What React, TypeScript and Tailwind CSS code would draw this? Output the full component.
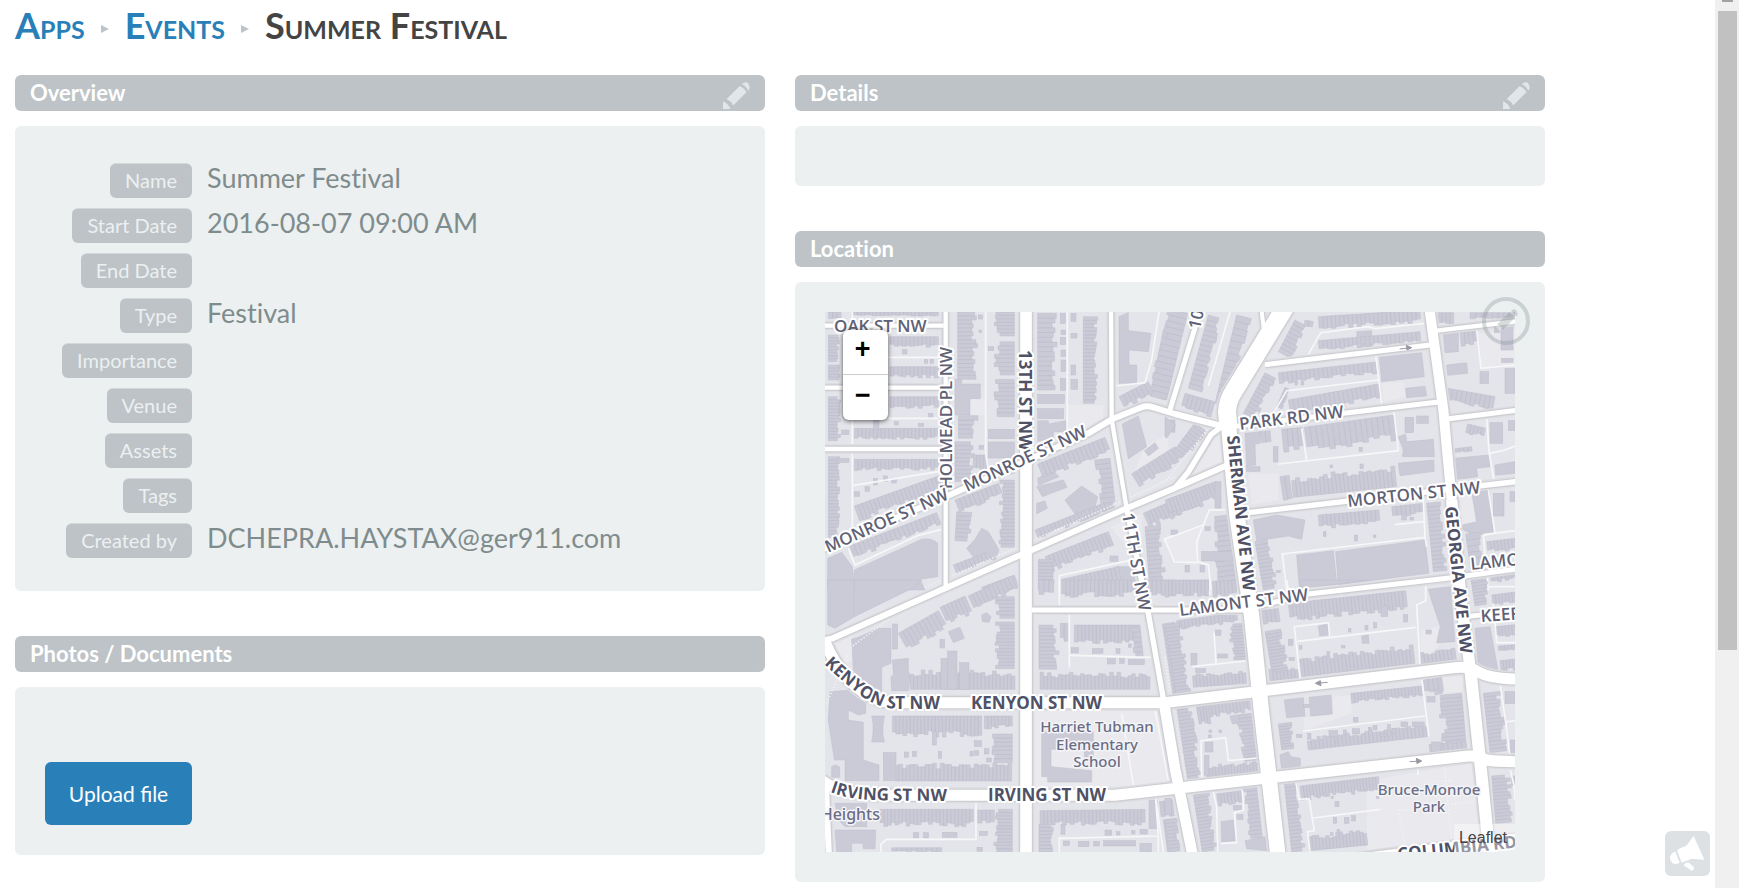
import type { ReactNode } from 'react';

type Row = [number, number, number, number, number, number];
type Box = [number, number, number, number];

interface District {
  x: number;
  y: number;
  grounds: string[];
  rows: Row[];
  shapes: string[];
  boxes: Box[];
  lanes: string[];
  paths: string[];
}

/* Terraced houses: n units along a street front, each with its own depth. */
function terrace([x1, y1, x2, y2, depth, n]: Row): string {
  const len = Math.hypot(x2 - x1, y2 - y1);
  const ux = (x2 - x1) / len;
  const uy = (y2 - y1) / len;
  const step = len / n;
  let d = '';
  for (let i = 0; i < n; i++) {
    const noise = Math.abs(Math.sin((i + 1) * 12.9898 + x1 * 0.37 + y1 * 0.73) * 43.7) % 1;
    const h = depth * (0.7 + noise * 0.34);
    const ax = x1 + ux * step * i;
    const ay = y1 + uy * step * i;
    const bx = ax + ux * step;
    const by = ay + uy * step;
    d += `M${ax.toFixed(1)} ${ay.toFixed(1)}L${bx.toFixed(1)} ${by.toFixed(1)}L${(bx - uy * h).toFixed(1)} ${(by + ux * h).toFixed(1)}L${(ax - uy * h).toFixed(1)} ${(ay + ux * h).toFixed(1)}Z`;
  }
  return d;
}

const districts: District[] = [
  {
    x: -30, y: -36,
    grounds: ['M755 315H865V372L755 420Z', 'M465 295H510V345H465Z', 'M890 680L980 640V780L900 700Z', 'M990 440L1060 400V450L960 510Z'],
    rows: [
      [115, 36, 370, 36, 12, 22], [40, 36, 78, 36, 20, 3],
      [40, 105, 40, 185, -35, 9], [40, 195, 40, 240, -35, 5], [40, 290, 40, 422, -36, 14], [40, 470, 40, 712, -34, 24],
      [225, 110, 370, 110, 32, 12], [225, 200, 370, 200, 33, 12], [225, 290, 370, 290, 34, 12],
      [118, 385, 370, 385, 32, 22], [118, 478, 370, 478, 33, 22],
      [118, 618, 370, 528, 48, 22], [104, 738, 365, 638, 40, 20],
      [428, 36, 428, 238, -58, 17], [430, 347, 430, 415, -58, 5], [420, 425, 420, 545, -58, 10], [475, 465, 515, 465, 52, 4],
      [598, 36, 598, 108, 60, 7], [598, 125, 598, 225, 58, 8], [598, 238, 598, 350, 60, 9], [598, 540, 598, 742, 46, 19],
      [668, 40, 668, 270, -56, 16], [805, 50, 805, 310, -43, 24],
      [1045, 90, 1015, 240, -60, 7], [912, 290, 1000, 245, 42, 7], [950, 522, 1080, 440, 50, 11],
      [668, 492, 870, 412, 46, 16], [660, 690, 890, 600, 28, 20], [885, 475, 900, 605, 46, 9],
      [420, 600, 550, 550, 40, 10], [425, 635, 420, 722, -48, 7], [415, 795, 520, 755, 28, 9],
      [690, 770, 880, 695, 48, 17], [670, 778, 670, 870, -46, 9], [740, 838, 910, 800, 60, 14], [985, 640, 1080, 598, 50, 9],
      [990, 680, 1005, 870, -48, 15], [500, 862, 598, 825, 45, 9], [1060, 360, 1080, 360, 40, 2],
    ],
    shapes: [
      'M38 775L80 757L112 800L118 850V870H38Z', 'M118 810L320 718Q350 712 368 730V830L315 838L330 870H118Z',
      'M420 238H440V252H496V296H465V345H420Z', 'M668 362H700V372L752 362V395H715V415L668 424Z',
      'M912 50L940 38V92L1008 100L1000 155L942 150V195H965V250H912Z', 'M922 372L970 348L995 440L940 476Z',
      'M665 560L745 540L756 562L682 590Z', 'M665 610L690 603L697 625L665 642Z', 'M750 600L800 558L848 590L840 622L780 642Z',
      'M455 745L480 718L500 685L520 695L552 750L540 782L515 775L490 790Z', 'M988 452L1020 428L1030 445L1000 468Z', 'M1035 245L1058 252L1050 300L1026 292Z',
      'M668 535L712 510L732 530L670 556Z', 'M905 800H950L968 870H912Z', 'M545 495L598 480V520L550 530Z',
    ],
    boxes: [
      [520, 388, 78, 28], [520, 426, 78, 48], [668, 283, 80, 27], [668, 326, 78, 30], [738, 90, 14, 14], [736, 40, 15, 30], [736, 112, 16, 22],
      [738, 150, 14, 20], [738, 180, 14, 35], [736, 235, 16, 36], [768, 40, 15, 24], [768, 100, 18, 14], [768, 195, 14, 30], [768, 238, 20, 30],
      [118, 575, 16, 14], [150, 560, 14, 14], [175, 535, 12, 20], [205, 528, 12, 16], [230, 535, 14, 14], [328, 178, 10, 12], [345, 178, 10, 12],
      [262, 148, 14, 14], [490, 45, 12, 12], [520, 140, 16, 12], [176, 360, 16, 28], [340, 340, 14, 12], [238, 365, 12, 10], [310, 370, 16, 10],
      [492, 436, 14, 12], [492, 90, 8, 8], [885, 768, 24, 16], [92, 330, 10, 10], [80, 390, 22, 14], [68, 475, 34, 12],
    ],
    lanes: ['M112 36V680', 'M112 557L370 515', 'M220 172H370', 'M220 355H370', 'M100 745L120 795L310 706L380 688', 'M512 36V460L520 510', 'M757 36V420', 'M1032 36L1010 180L990 248L900 258', 'M733 870V827L960 778', 'M1080 705L1048 717L1080 780'],
    paths: ['M330 862L600 745', 'M655 720L930 600L1080 530', 'M905 380L945 600', 'M945 610L1080 550'],
  },
  {
    x: 1020, y: -36,
    grounds: ['M650 250L715 245L722 292L655 305Z', 'M250 520H340V600L260 615Z', 'M865 590H930V665L885 680Z', 'M940 100L1050 90V200L950 206Z', 'M90 470L170 400V490L80 535Z', 'M0 720L110 680L95 790L25 785Z'],
    rows: [
      [68, 40, 5, 300, 60, 15], [130, 45, 70, 265, -42, 15], [215, 45, 150, 310, -46, 14], [60, 280, 150, 305, 48, 7],
      [25, 455, 90, 368, 45, 9], [0, 600, 150, 545, 55, 14], [390, 60, 340, 155, -46, 8], [420, 60, 445, 65, 22, 2],
      [460, 50, 765, 30, 38, 24], [460, 122, 765, 95, 30, 24], [340, 218, 632, 186, 34, 22], [300, 218, 235, 340, -42, 11],
      [370, 300, 640, 252, 48, 20], [360, 262, 335, 320, -18, 6], [885, 97, 935, 92, 42, 4], [850, 265, 990, 290, 42, 10],
      [820, 38, 866, 38, 36, 4], [915, 38, 1050, 38, 18, 8], [350, 388, 412, 382, 75, 4], [418, 382, 685, 345, 78, 16],
      [345, 530, 372, 526, 76, 2], [385, 592, 695, 560, -62, 26], [270, 725, 295, 870, -42, 13], [460, 645, 642, 630, 42, 15],
      [680, 620, 775, 610, 32, 7], [785, 610, 805, 815, -44, 17], [188, 645, 215, 870, 52, 15], [0, 845, 135, 840, 35, 12],
      [908, 372, 962, 385, 28, 5], [870, 446, 920, 440, 14, 4], [965, 725, 1050, 715, 34, 8], [902, 702, 925, 870, -46, 9], [975, 815, 1050, 808, 32, 7],
      [150, 545, 168, 545, 78, 1], [285, 395, 315, 392, 36, 2],
    ],
    shapes: [
      'M643 172L770 158L778 230L650 245Z', 'M722 265L780 259L785 288L725 293Z', 'M835 100L880 95V155L840 158Z', 'M845 195L905 188L908 220L848 226Z',
      'M700 410L722 402L725 425L805 418L808 470H712L715 450Z', 'M700 490L806 480L808 514L705 527Z', 'M265 660L335 645L420 660L410 718L370 708L275 722Z',
      'M395 765L505 752L516 853L403 863Z', 'M512 755L780 720L792 820L520 854Z', 'M868 475L970 465L975 500L935 505L938 530L878 538Z',
      'M920 578L972 570L986 700L930 705L895 690L892 675L935 665Z', 'M990 495L1050 485V520L992 526Z', 'M240 400L285 395V430L270 432L272 495L245 498Z',
      'M575 95L620 92L622 138L578 142Z', 'M0 350L32 375L5 415L0 410Z',
    ],
    boxes: [
      [325, 440, 14, 46], [720, 352, 26, 46], [755, 348, 35, 22], [1008, 78, 36, 72], [1020, 206, 30, 74], [945, 215, 26, 36], [975, 368, 38, 62],
      [1030, 362, 20, 30], [985, 580, 32, 68], [1035, 575, 15, 30], [110, 755, 92, 28], [495, 495, 8, 8], [585, 492, 10, 14], [582, 442, 10, 12],
      [568, 705, 10, 18], [475, 695, 8, 14], [710, 640, 14, 20], [735, 652, 10, 8], [625, 705, 8, 8], [120, 680, 16, 12], [60, 796, 14, 20], [105, 796, 14, 20],
      [18, 690, 20, 14], [1010, 175, 34, 12], [245, 500, 40, 14], [335, 812, 12, 6], [390, 245, 8, 10], [408, 245, 8, 10],
    ],
    lanes: ['M195 36L130 258', 'M425 172L467 98L610 80L630 86L780 70', 'M632 165L650 310', 'M325 340L365 272L640 240', 'M410 385L425 480', 'M340 492L700 452L686 330', 'M935 90L948 205L1050 195', 'M965 350L972 455L990 560', 'M975 460L1020 450L1050 438', 'M970 570L990 700L955 706L970 870', 'M955 704L1050 692', 'M365 870L352 762L780 712L775 600', 'M690 674L780 664', 'M180 630H133L95 725L98 785L130 795L138 870', 'M0 718L112 676', 'M0 718L28 786L98 788', 'M780 712L785 740'],
    paths: ['M0 595L180 500', 'M168 385L185 600', 'M5 540L150 360'],
  },
  {
    x: -30, y: 804,
    grounds: ['M655 390L1040 388L1072 600L950 618L655 626Z', 'M30 180L110 150L120 240L60 260L30 210Z'],
    rows: [
      [375, 82, 450, 48, 58, 7], [460, 48, 590, -12, 46, 11], [250, 160, 370, 92, 62, 10], [598, 50, 598, 115, 60, 6], [598, 126, 598, 266, 58, 14],
      [285, 328, 600, 328, -56, 28], [672, 135, 672, 268, -60, 12], [778, 135, 975, 135, 54, 18], [675, 328, 1005, 328, -50, 30],
      [672, 0, 716, 0, 48, 3], [740, 0, 950, 0, 50, 17], [970, 0, 1080, 0, 46, 8], [232, 408, 500, 408, 62, 25], [508, 408, 592, 408, 38, 8],
      [592, 462, 592, 548, 60, 7], [240, 603, 590, 603, -52, 31], [195, 688, 475, 688, 50, 25], [592, 688, 592, 816, 54, 13], [230, 803, 380, 803, 13, 10],
      [675, 692, 990, 688, 46, 28], [672, 732, 672, 816, -46, 8], [1033, 665, 1072, 660, 46, 3], [1045, 720, 1058, 816, -42, 8], [1042, 132, 1075, 350, -42, 18],
      [975, 140, 985, 230, 28, 6], [736, 130, 758, 130, 52, 2], [488, 690, 538, 690, 38, 4],
    ],
    shapes: [
      'M38 0H118V110L60 145L38 135Z', 'M118 0H320L298 22L118 110Z', 'M400 155L435 142L448 175L415 188Z', 'M500 105L515 98L528 110L522 127L502 125Z',
      'M110 178L130 172L190 145H228V250L200 262V362L165 350L115 270Z', 'M232 240L280 235V270L285 292L280 332H230L228 290L236 285Z',
      'M45 335L110 330L152 365V400L130 405L100 390V420L145 427V540L192 555V602H90V540H58L40 420Z', 'M60 750H182L180 806H145L143 790H110V816H65Z',
      'M680 455H835V530H808V508H708V560L830 572V606H698V590H680Z', 'M50 560Q62 550 74 562V592H50Z', 'M60 670H155V740H90L70 720Z', 'M170 408H208L204 435V465L208 486H170L174 460V430Z',
    ],
    boxes: [
      [232, 132, 16, 75], [378, 235, 20, 92], [398, 213, 28, 115], [434, 248, 28, 80], [205, 518, 38, 84], [352, 455, 12, 40], [478, 482, 22, 18],
      [508, 506, 14, 16], [515, 534, 14, 12], [268, 516, 12, 16], [292, 514, 12, 16], [370, 515, 10, 20], [465, 514, 10, 14], [479, 512, 12, 14],
      [295, 758, 16, 16], [326, 758, 14, 16], [382, 757, 14, 15], [398, 757, 28, 15], [493, 754, 24, 12], [768, 203, 22, 16], [832, 206, 32, 14],
      [903, 206, 12, 14], [940, 192, 10, 10], [877, 236, 24, 16], [914, 236, 14, 14], [940, 238, 48, 16], [738, 733, 12, 30], [870, 750, 20, 16],
      [905, 755, 10, 10], [950, 752, 10, 10], [975, 748, 22, 14], [745, 783, 18, 14], [790, 784, 32, 16], [836, 784, 18, 14], [866, 782, 96, 16],
      [975, 790, 34, 26], [1002, 660, 24, 86], [375, 178, 14, 26], [486, 802, 16, 12],
    ],
    lanes: ['M763 95V262', 'M763 226L1010 232', 'M733 0V80', 'M733 816V775L1030 768L1022 655L1045 816', 'M483 665V778H215L198 792V816', 'M920 400L955 615', 'M1020 388L1060 600', 'M1030 768V816'],
    paths: ['M35 370L110 200L340 30L400 0', 'M1000 105L1040 350', 'M1025 75H1080'],
  },
  {
    x: 1020, y: 804,
    grounds: ['M605 602L918 550L965 816H605Z', 'M505 350L560 345V400L420 450L415 415L500 405Z', 'M770 150L820 140V200L765 240Z', 'M830 290L895 290L890 335L835 340Z'],
    rows: [
      [0, 0, 130, 0, 50, 12], [142, 4, 212, 0, 46, 6], [35, 122, 215, 98, 28, 16], [0, 135, 32, 342, -46, 20], [240, 130, 245, 238, 48, 12],
      [85, 322, 245, 310, -40, 15], [290, 92, 340, 85, 42, 4], [370, 70, 722, 32, 56, 32], [300, 155, 325, 300, -52, 15], [315, 302, 402, 293, -34, 8],
      [410, 290, 750, 250, -56, 30], [768, 252, 874, 238, -34, 9], [918, 0, 930, 78, -46, 8], [980, 45, 1050, 36, 34, 7], [990, 140, 1050, 134, 34, 6],
      [1000, 198, 1050, 194, 18, 5], [1005, 242, 1050, 237, 35, 5], [35, 380, 68, 600, -44, 21], [95, 382, 255, 355, 38, 15], [265, 400, 280, 540, 50, 13],
      [125, 592, 285, 580, -36, 17], [557, 340, 770, 318, 30, 21], [430, 510, 787, 470, -36, 31], [340, 432, 350, 510, -40, 9], [890, 340, 905, 512, 70, 15],
      [775, 300, 830, 292, 46, 4], [955, 340, 975, 518, -52, 16], [405, 618, 640, 590, 44, 25], [358, 612, 380, 816, -40, 19], [435, 812, 608, 795, -46, 17],
      [85, 645, 112, 816, -46, 17], [155, 642, 228, 632, 40, 7], [275, 620, 292, 772, 40, 13], [0, 720, 10, 816, -38, 9], [980, 588, 992, 730, -54, 14],
      [795, 518, 905, 506, -28, 8], [95, 380, 130, 375, 60, 4],
    ],
    shapes: [
      'M405 0H612L520 12L410 24Z', 'M790 28L856 20L870 185L815 188L826 140L800 62Z', 'M930 145L975 140L1000 277L940 258Z', 'M195 408L262 400V425L202 432Z',
      'M358 360L415 353L420 408L365 413Z', 'M432 352L498 345L502 402L437 408Z', 'M345 525L370 515L378 530L406 535V560L350 570Z', 'M168 725L205 720L212 782L170 786Z',
      'M240 782L300 770L305 812L245 806Z', 'M460 138L488 132L492 165L464 168Z', 'M590 168L610 165L612 190H592Z', 'M806 290L828 292L832 340L810 345Z',
    ],
    boxes: [
      [415, 373, 18, 10], [1020, 335, 30, 36], [1036, 480, 14, 38], [1040, 588, 10, 28], [0, 655, 20, 50], [565, 412, 14, 14], [395, 463, 16, 10],
      [428, 460, 10, 18], [456, 470, 10, 10], [492, 452, 26, 18], [535, 450, 10, 14], [562, 446, 22, 16], [610, 442, 10, 10], [624, 436, 12, 14], [645, 462, 18, 8],
      [668, 434, 8, 34], [682, 446, 10, 14], [708, 426, 20, 14], [742, 426, 36, 14], [786, 350, 24, 16], [512, 484, 8, 8], [600, 136, 9, 14], [626, 128, 9, 16],
      [550, 146, 8, 10], [648, 78, 20, 32], [716, 104, 12, 22], [783, 150, 16, 12], [403, 196, 8, 12], [486, 214, 8, 12], [530, 196, 10, 8], [530, 222, 8, 8],
      [78, 220, 18, 36], [158, 222, 30, 12], [152, 150, 16, 16], [92, 266, 30, 12], [370, 178, 14, 18], [372, 232, 16, 10], [120, 486, 24, 30], [118, 526, 14, 60],
      [132, 450, 8, 8], [162, 450, 8, 8], [130, 465, 10, 8], [510, 664, 12, 16], [505, 712, 10, 18], [538, 712, 14, 18], [560, 707, 12, 16], [516, 748, 8, 10],
      [496, 758, 8, 8], [205, 676, 24, 14], [216, 704, 18, 14], [498, 650, 8, 6], [634, 650, 8, 6], [800, 486, 28, 28],
    ],
    lanes: ['M135 0V45', 'M365 0L370 30', 'M147 158L153 250', 'M80 260L242 243', 'M405 295L388 140L490 128L494 170', 'M397 184L752 142', 'M782 15V62L755 75L765 252', 'M972 20H1050', 'M985 70L995 188H1050', 'M770 295L792 470', 'M414 453L780 408', 'M110 595L108 483L182 473L190 542L278 534', 'M145 635L155 680L158 816', 'M232 630L236 690L208 698L215 788L168 790', 'M392 605L402 658L432 656L448 752L428 755L435 816', 'M445 714L646 688', 'M1005 310L1022 425L1035 530', 'M1022 426L1050 422', 'M757 560L760 585', 'M1036 570L1048 620L1050 660'],
    paths: ['M22 385L62 600', 'M0 230L15 340', 'M838 560L842 600L850 680L860 780', 'M700 690L718 790', 'M700 690H750', 'M705 660L720 640', 'M800 605L865 602', 'M860 672L940 664', 'M20 372L260 348', 'M68 605L285 585'],
  },
];

/* [path, width] in thirds of a pixel */
const roads: [string, number][] = [
  ['M-20 41H356', 13], ['M-20 227H356', 13], ['M-20 411H356', 14], ['M362 -20V830', 13],
  ['M-10 713L362 554L790 364L860 322L950 286Q965 280 985 286L1050 306L1190 342', 18],
  ['M858 -20L860 322L905 589', 13], ['M905 589L970 904L1015 1160', 16], ['M1015 1160L1050 1370L1105 1640', 32],
  ['M-10 986L20 980L362 828L602 722L905 589L1050 528L1215 456', 18], ['M1050 528L1090 480L1158 368L1195 340', 16],
  ['M1384 -20L1225 240Q1208 265 1206 300L1210 340', 54], ['M1210 330L1235 604L1280 914L1310 1204L1360 1640', 46],
  ['M1812 -20L1855 294L1880 564', 30], ['M1880 564L1910 880L1935 1064', 34], ['M1935 1064L1965 1344L1995 1640', 36],
  ['M1320 158L1815 99', 15], ['M1220 344L1840 270', 15], ['M1865 321L2090 293', 15], ['M1835 56L2090 26', 13],
  ['M1270 602L2090 507', 16], ['M620 894H1250L1450 846L1880 797L2090 769', 15], ['M1920 914L2090 897', 14],
  ['M0 990Q60 1130 170 1168L220 1172H1020L1890 1067Q1935 1062 1960 1080Q2000 1102 2090 1101', 33],
  ['M-10 1405Q40 1445 170 1450H870L1320 1399L1930 1332Q1960 1330 1985 1344Q2010 1349 2090 1349', 33],
  ['M2 1400L12 1640', 18], ['M603 -20V1640', 35], ['M1128 -12L1033 300', 15], ['M1308 -20L1318 65', 12], ['M1600 1640L2090 1578', 30],
];

interface StreetLabel { text: string; x: number; y: number; turn: number; strong?: boolean }

const streetLabels: StreetLabel[] = [
  { text: 'OAK ST NW', x: 9, y: 20, turn: 0 },
  { text: 'HOLMEAD PL NW', x: 127, y: 177, turn: -90 },
  { text: '13TH ST NW', x: 194, y: 38, turn: 90, strong: true },
  { text: 'MONROE ST NW', x: 3, y: 241, turn: -24 },
  { text: 'MONROE ST NW', x: 142, y: 180, turn: -25 },
  { text: '11TH ST NW', x: 297, y: 202, turn: 80 },
  { text: '10', x: 375, y: 18, turn: -78 },
  { text: 'V', x: -8, y: 54, turn: -23 },
  { text: 'PARK RD NW', x: 415, y: 118, turn: -7 },
  { text: 'SHERMAN AVE NW', x: 402, y: 124, turn: 84, strong: true },
  { text: 'MORTON ST NW', x: 523, y: 195, turn: -6 },
  { text: 'GEORGIA AVE NW', x: 620, y: 195, turn: 84, strong: true },
  { text: 'LAMO', x: 646, y: 258, turn: -6 },
  { text: 'LAMONT ST NW', x: 355, y: 304, turn: -7 },
  { text: 'KEEF', x: 656, y: 310, turn: -4 },
  { text: 'KENYON ST NW', x: 146, y: 397, turn: 0, strong: true },
  { text: 'IRVING ST NW', x: 163, y: 489, turn: 0, strong: true },
  { text: 'COLUMBIA RD', x: 573, y: 548, turn: -6, strong: true },
];

function StreetMap() {
  return (
    <svg role="img" aria-label="Street map" width="690" height="540" viewBox="0 0 690 540" className="block max-w-none">
      <g transform="scale(0.33333)">
        <rect width="2071" height="1621" fill="#e4e5ea" />
        {districts.map((d, i) => (
          <g key={i} transform={`translate(${d.x} ${d.y})`}>
            {d.grounds.map((p) => <path key={p} d={p} fill="#e9e9ee" />)}
            <g fill="#cbcad7" stroke="#bfbecc" strokeWidth="1.5">
              {d.shapes.map((p) => <path key={p} d={p} />)}
              {d.rows.map((r) => <path key={r.join()} d={terrace(r)} />)}
              {d.boxes.map(([x, y, w, h]) => <rect key={`${x}-${y}`} x={x} y={y} width={w} height={h} />)}
            </g>
            <g fill="none" stroke="#f7f7f9" strokeWidth="5">
              {d.lanes.map((p) => <path key={p} d={p} />)}
            </g>
            <g fill="none" stroke="#f2f2f5" strokeWidth="5" strokeDasharray="4 6">
              {d.paths.map((p) => <path key={p} d={p} />)}
            </g>
          </g>
        ))}
        <g fill="none" stroke="#dcdde1" strokeLinejoin="round">
          {roads.map(([p, w]) => <path key={p} d={p} strokeWidth={w + 15} />)}
        </g>
        <g fill="none" stroke="#cdcdd2" strokeLinejoin="round">
          {roads.map(([p, w]) => <path key={p} d={p} strokeWidth={w + 7} />)}
        </g>
        <g fill="none" stroke="#fff" strokeLinejoin="round">
          {roads.map(([p, w]) => <path key={p} d={p} strokeWidth={w} />)}
        </g>
        <g fill="none" stroke="#9a9aa6" strokeWidth="3">
          <path d="M1724 111L1758 107M1744 100L1760 107L1746 114Z" fill="#9a9aa6" />
          <path d="M1508 1111L1474 1114M1486 1106L1471 1114L1488 1121Z" fill="#9a9aa6" />
          <path d="M1754 1349L1788 1347M1774 1339L1790 1347L1776 1355Z" fill="#9a9aa6" />
        </g>
      </g>
      <defs>
        <path id="kenyon-bend" d="M-2 351Q18 370 34 382Q48 394 69 397H145" />
        <path id="irving-bend" d="M5 480Q24 487 45 488Q60 489 145 489" />
      </defs>
      <g
        className="font-semibold [font-family:'Open_Sans','Noto_Sans',sans-serif] [paint-order:stroke]"
        fontSize="17"
        stroke="#fff"
        strokeWidth="4"
        strokeLinejoin="round"
      >
        {streetLabels.map((l, i) => (
          <text key={i} transform={`translate(${l.x} ${l.y}) rotate(${l.turn})`} fill={l.strong ? '#4f5166' : '#5f6175'} className={l.strong ? 'font-bold' : 'font-semibold'}>
            {l.text}
          </text>
        ))}
        <text fill="#4f5166" className="font-bold"><textPath href="#kenyon-bend" startOffset="1">KENYON ST NW</textPath></text>
        <text fill="#4f5166" className="font-bold"><textPath href="#irving-bend">IRVING ST NW</textPath></text>
      </g>
      <g
        className="font-medium [font-family:'Noto_Sans','Open_Sans',sans-serif] [paint-order:stroke]"
        fontSize="15"
        fill="#6b6d85"
        stroke="#f4f4f7"
        strokeWidth="3"
        strokeLinejoin="round"
        textAnchor="middle"
      >
        <text x="272" y="420">Harriet Tubman</text>
        <text x="272" y="438">Elementary</text>
        <text x="272" y="455">School</text>
        <text x="604" y="483">Bruce-Monroe</text>
        <text x="604" y="500">Park</text>
        <text x="55" y="508" fontSize="16" textAnchor="end">Heights</text>
      </g>
    </svg>
  );
}

function Pencil({ className }: { className: string }) {
  return (
    <svg viewBox="0 0 82 82" className={className} fill="currentColor" aria-hidden="true">
      <path d="M57 6Q64 0 72 1Q81 7 81 18Q80 23 76 26Q70 12 57 6Z" />
      <path d="M51 12Q65 18 71 31L31 71Q24 58 11 52Z" />
      <path d="M0 60H4Q16 66 22 79L20 82H0Z" />
    </svg>
  );
}

function Section({ title, editable, className, children }: { title: string; editable?: boolean; className: string; children?: ReactNode }) {
  return (
    <section className="flex flex-col gap-[15px]">
      <header className="flex h-9 items-center justify-between rounded-md bg-[#bdc3c7] px-[15px]">
        <h2 className="text-[22px] leading-9 font-bold text-white [font-variant-ligatures:no-common-ligatures]">{title}</h2>
        {editable && (
          <button type="button" aria-label={`Edit ${title}`} className="pt-1 text-[#e3e6e8]">
            <Pencil className="size-[27px]" />
          </button>
        )}
      </header>
      <div className={`rounded-md bg-[#ecf0f1] ${className}`}>{children}</div>
    </section>
  );
}

const fields: [string, string][] = [
  ['Name', 'Summer Festival'],
  ['Start Date', '2016-08-07 09:00 AM'],
  ['End Date', ''],
  ['Type', 'Festival'],
  ['Importance', ''],
  ['Venue', ''],
  ['Assets', ''],
  ['Tags', ''],
  ['Created by', 'DCHEPRA.HAYSTAX@ger911.com'],
];

function Separator() {
  return (
    <svg viewBox="0 0 8 8" className="mt-2 size-2 fill-[#bdc3c7]" aria-hidden="true">
      <path d="M0 0L8 4L0 8Z" />
    </svg>
  );
}

export default function App() {
  return (
    <div className="min-h-screen bg-white pr-6 font-['Lato',sans-serif]">
      <main className="max-w-[1560px] px-[15px] pb-[6px]">
        <nav aria-label="Breadcrumb" className="flex h-[75px] items-start gap-4 pt-[2px] text-[36px] leading-[46px] font-bold [font-variant-caps:small-caps]">
          <a href="#apps" className="text-[#2980b9]">Apps</a>
          <span className="flex h-[46px] items-center"><Separator /></span>
          <a href="#events" className="text-[#2980b9]">Events</a>
          <span className="flex h-[46px] items-center"><Separator /></span>
          <h1 className="text-[#444]">Summer Festival</h1>
        </nav>

        <div className="grid grid-cols-2 items-start gap-[30px]">
          <div className="flex flex-col gap-[45px]">
            <Section title="Overview" editable className="p-[30px]">
              <dl>
                {fields.map(([label, value]) => (
                  <div key={label} className="flex h-[45px] items-baseline gap-[15px] pt-[7px]">
                    <dt className="flex w-[147px] justify-end">
                      <span className="rounded-md border-t border-[#d3d7da] bg-[#bdc3c7] px-[15px] pb-[2px] text-[20px] leading-[32px] text-[#ecf0f1]">{label}</span>
                    </dt>
                    <dd className="text-[27px] leading-none text-[#7f8c8d] [font-variant-ligatures:no-common-ligatures]">{value}</dd>
                  </div>
                ))}
              </dl>
            </Section>
            <Section title="Photos / Documents" className="px-[30px] pt-[75px] pb-[30px]">
              <button type="button" className="block h-[63px] w-[147px] rounded-md bg-[#2980b9] text-[21px] text-white">Upload file</button>
            </Section>
          </div>

          <div className="flex flex-col gap-[45px]">
            <Section title="Details" editable className="h-[60px]" />
            <Section title="Location" className="p-[30px]">
              <div className="relative">
                <div className="h-[540px] overflow-hidden">
                  <StreetMap />
                </div>
                <div className="absolute top-[18px] left-[18px] flex w-[45px] flex-col rounded-md bg-white font-['Liberation_Mono',monospace] text-[27px] leading-none font-bold text-black shadow-[0_1px_5px_rgba(0,0,0,0.65)]">
                  <button type="button" aria-label="Zoom in" className="h-[45px] border-b border-[#ccc] pr-[6px] pb-px">+</button>
                  <button type="button" aria-label="Zoom out" className="h-[45px] pr-[6px] pb-px">−</button>
                </div>
                <div className="absolute right-0 bottom-0 bg-white/40 pr-2 pl-[5px] font-['Liberation_Sans',sans-serif] text-[16px] leading-[28px] text-[#444]">
                  <a href="#leaflet">Leaflet</a>
                </div>
                <button type="button" aria-label="Edit location" className="absolute -top-[15px] -right-[15px] flex size-12 items-center justify-center rounded-full border-4 border-[#7f8c8d] text-[#7f8c8d] opacity-30">
                  <Pencil className="size-6" />
                </button>
              </div>
            </Section>
          </div>
        </div>
      </main>

      <button type="button" aria-label="Send feedback" className="fixed right-[29px] bottom-3 size-[45px] rounded-md bg-[#dde1e4]">
        <svg viewBox="0 0 135 135" className="size-full fill-white" aria-hidden="true">
          <path d="M86 15L118 86L80 83L50 95L36 58Q45 50 64 44Z" />
          <path d="M31 62L44 95Q31 102 22 96Q14 88 15 78Q19 64 31 62Z" />
          <path d="M57 99L70 94L86 108Q89 116 80 119L58 104Z" />
        </svg>
      </button>

      <div aria-hidden="true" className="fixed inset-y-0 right-0 w-6 bg-[#f0f0f0]">
        <div className="mx-auto h-[2px] w-[11px] bg-[#a3a3a3]" />
        <div className="mt-[9px] ml-[3px] h-[72%] w-[19px] bg-[#c1c1c1]" />
      </div>
    </div>
  );
}
